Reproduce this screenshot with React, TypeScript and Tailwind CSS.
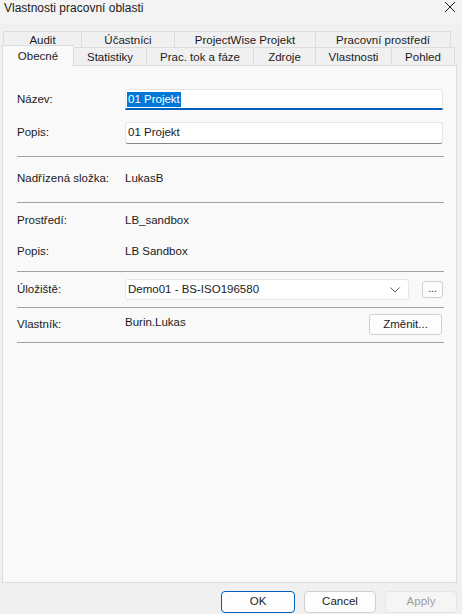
import React from 'react';

const topTabs = [
  { label: 'Audit', w: 'w-[79px]' },
  { label: 'Účastníci', w: 'w-[94px]' },
  { label: 'ProjectWise Projekt', w: 'w-[142px]' },
  { label: 'Pracovní prostředí', w: 'w-[136px]' },
];

const bottomTabs = [
  { label: 'Statistiky', w: 'w-[73px]' },
  { label: 'Prac. tok a fáze', w: 'w-[107px]' },
  { label: 'Zdroje', w: 'w-[62px]' },
  { label: 'Vlastnosti', w: 'w-[76px]' },
  { label: 'Pohled', w: 'w-[63px]' },
];

const Separator = ({ mt }: { mt: string }) => (
  <div className={`${mt} mr-[12px] h-px bg-[#a0a0a0]`} />
);

const Label = ({ children }: { children: React.ReactNode }) => (
  <div className="w-[108px] shrink-0 text-[#1b1b1b]">{children}</div>
);

export default function App() {
  return (
    <div className="w-[462px] h-[614px] bg-[#f0f0f0] flex flex-col text-[11.5px] text-[#1b1b1b] font-['Liberation_Sans',Arial,sans-serif] overflow-hidden">
      {/* Title bar */}
      <div className="h-[24px] bg-[#f3f3f3] flex items-start justify-between pl-[4px] pr-[6px]">
        <span className="text-[12px] leading-[16px] text-[#1b1b1b]">Vlastnosti pracovní oblasti</span>
        <svg width="12" height="12" viewBox="0 0 12 12" className="mt-[1px]">
          <path d="M1 1L11 11M11 1L1 11" stroke="#1b1b1b" strokeWidth="1" />
        </svg>
      </div>

      {/* Tabs */}
      <div className="mt-[7px] flex flex-col">
        <div className="flex ml-[3px] h-[16px]">
          {topTabs.map((t) => (
            <div
              key={t.label}
              className={`${t.w} h-[16px] border-t border-l border-r border-[#dcdcdc] bg-[#f0f0f0] flex items-center justify-center leading-[14px] pt-[1px] -mr-px`}
            >
              {t.label}
            </div>
          ))}
        </div>
        <div className="flex h-[18px] relative">
          <div className="w-[72px] ml-[2px] h-[21px] -mt-[2px] border-t border-l border-r border-[#dcdcdc] bg-[#f9f9f9] relative z-10 flex items-start justify-center pt-[3px] leading-[14px]">
            Obecné
          </div>
          {bottomTabs.map((t) => (
            <div
              key={t.label}
              className={`${t.w} h-[18px] border-t border-r border-[#dcdcdc] bg-[#f0f0f0] flex items-center justify-center leading-[14px] pt-[1px]`}
            >
              {t.label}
            </div>
          ))}
        </div>
      </div>

      {/* Panel */}
      <div className="mx-[2px] w-[455px] h-[518px] border border-[#dcdcdc] bg-[#f9f9f9] flex flex-col pl-[14px]">
        <div className="mt-[23px] flex items-center h-[21px]">
          <Label>Název:</Label>
          <div className="w-[318px] h-[21px] bg-white border border-[#e5e5e5] border-b-2 border-b-[#005fb8] rounded-t-[3px] flex items-center pl-[1px]">
            <span className="bg-[#0078d7] text-white leading-[15px] px-[1px]">01 Projekt</span>
          </div>
        </div>
        <div className="mt-[12px] flex items-center h-[22px]">
          <Label>Popis:</Label>
          <div className="w-[318px] h-[22px] bg-white border border-[#e5e5e5] border-b-[#868686] rounded-[3px] flex items-center pl-[2px]">
            01 Projekt
          </div>
        </div>
        <Separator mt="mt-[12px]" />
        <div className="mt-[12px] flex items-center h-[20px]">
          <Label>Nadřízená složka:</Label>
          <span>LukasB</span>
        </div>
        <Separator mt="mt-[13px]" />
        <div className="mt-[8px] flex items-center h-[20px]">
          <Label>Prostředí:</Label>
          <span>LB_sandbox</span>
        </div>
        <div className="mt-[11px] flex items-center h-[20px]">
          <Label>Popis:</Label>
          <span>LB Sandbox</span>
        </div>
        <Separator mt="mt-[9px]" />
        <div className="mt-[7px] flex items-center h-[21px]">
          <Label>Úložiště:</Label>
          <div className="w-[284px] h-[21px] bg-white border border-[#e5e5e5] rounded-[3px] flex items-center justify-between pl-[2px] pr-[8px]">
            <span>Demo01 - BS-ISO196580</span>
            <svg width="10" height="6" viewBox="0 0 10 6">
              <path d="M0.5 0.5L5 5L9.5 0.5" stroke="#5c5c5c" strokeWidth="1" fill="none" />
            </svg>
          </div>
          <div className="ml-[13px] w-[21px] h-[17px] bg-[#fdfdfd] border border-[#d0d0d0] rounded-[3px] flex items-center justify-center text-[10px] leading-[10px] pb-[2px]">
            ...
          </div>
        </div>
        <Separator mt="mt-[7px]" />
        <div className="mt-[6px] flex items-center h-[21px]">
          <Label>Vlastník:</Label>
          <span className="flex-1 -mt-[4px]">Burin.Lukas</span>
          <div className="mr-[14px] w-[73px] h-[21px] bg-[#fdfdfd] border border-[#d0d0d0] rounded-[3px] flex items-center justify-center">
            Změnit...
          </div>
        </div>
        <Separator mt="mt-[7px]" />
      </div>

      {/* Dialog buttons */}
      <div className="flex justify-end gap-[9px] pr-[5px] mt-[8px]">
        <div className="w-[74px] h-[22px] bg-[#fdfdfd] border border-[#005fb8] rounded-[4px] flex items-center justify-center">OK</div>
        <div className="w-[72px] h-[22px] bg-[#fdfdfd] border border-[#d0d0d0] rounded-[4px] flex items-center justify-center">Cancel</div>
        <div className="w-[72px] h-[22px] bg-[#f5f5f5] border border-[#e5e5e5] rounded-[4px] flex items-center justify-center text-[#a0a0a0]">Apply</div>
      </div>
    </div>
  );
}
